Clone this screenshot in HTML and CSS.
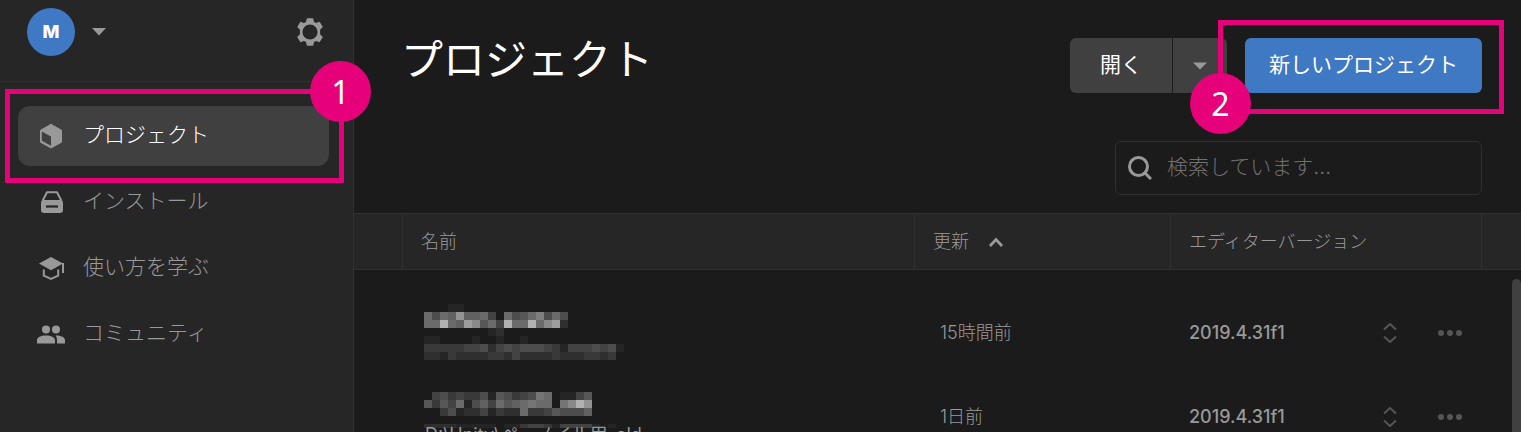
FILE: index.html
```html
<!DOCTYPE html>
<html lang="ja">
<head>
<meta charset="utf-8">
<title>プロジェクト</title>
<link rel="stylesheet" href="styles.css">
</head>
<body>
<div class="app">
  <aside class="sidebar">
    <div class="account">
      <button class="avatar" type="button">M</button>
      <button class="icon-button account-menu" type="button" aria-label="アカウント">
        <svg width="14" height="8" viewBox="0 0 14 8"><path d="M0 0h14L7 7.500z" fill="#999"/></svg>
      </button>
      <button class="icon-button settings" type="button" aria-label="設定">
        <svg width="28" height="28" viewBox="0 0 28 28"><path fill="#999" fill-rule="evenodd" d="M10.900 0.300h6.200l.9 3.700 2 1.100 3.600-1.300 3.200 5.300-2.700 2.600v4.600l2.700 2.600-3.200 5.300-3.600-1.300-2 1.100-.9 3.700h-6.200l-.9-3.700-2-1.100-3.600 1.300-3.200-5.300 2.700-2.600v-4.600L1.200 9.100l3.200-5.300L8 5.100 10 4zM14 6.400a7.600 7.600 0 1 0 0 15.200a7.600 7.600 0 1 0 0-15.200z"/></svg>
      </button>
    </div>
    <nav class="nav">
      <a class="nav-item active" href="#projects">
        <svg width="26" height="26" viewBox="0 0 26 26"><path fill="#999" stroke="#999" stroke-linejoin="round" d="M13 1.300l10.500 6v11.900L13 25 2.500 19.200V7.300z"/><path fill="#404040" d="M3.800 8.600l9.200 5v9.200l-9.200-5z"/></svg>
        <span class="nav-label">プロジェクト</span>
        <span class="marker"><span class="marker-number">1</span></span>
      </a>
      <a class="nav-item" href="#installs">
        <svg width="26" height="26" viewBox="0 0 26 26"><path fill="none" stroke="#999" stroke-width="2" stroke-linejoin="round" d="M4.500 12L9 3.200h10L23.500 12"/><rect x="3" y="11" width="22" height="13" rx="3" fill="#999"/><path d="M8 17.500h12" stroke="#262626" stroke-width="2.200"/></svg>
        <span class="nav-label">インストール</span>
      </a>
      <a class="nav-item" href="#learn">
        <svg width="26" height="26" viewBox="0 0 26 26"><path fill="#999" d="M13 2l12 6.500L13 15.200 1 8.500z"/><path d="M25 8v10M5.800 14.500v6.200l7.200 3.200 7.200-3.200v-6.200" fill="none" stroke="#999" stroke-width="2"/></svg>
        <span class="nav-label">使い方を学ぶ</span>
      </a>
      <a class="nav-item" href="#community">
        <svg width="28" height="26" viewBox="0 0 28 26"><g fill="#999"><circle cx="9" cy="8.500" r="4"/><circle cx="19" cy="8.500" r="4"/><path d="M0 22.500v-3c0-3.400 4-5 9-5s9 1.600 9 5v3zM18.500 14.600c5.500 0 9.500 1.500 9.500 4.900v3h-8v-3c0-2-.5-3.600-1.500-4.900z"/></g></svg>
        <span class="nav-label">コミュニティ</span>
      </a>
    </nav>
  </aside>

  <main class="main">
    <header class="toolbar">
      <h1 class="title">プロジェクト</h1>
      <div class="actions">
        <div class="split">
          <button class="button open" type="button">開く</button>
          <button class="button more" type="button" aria-label="その他">
            <svg width="14" height="8" viewBox="0 0 14 8"><path d="M0 0.500h14L7 7.500z" fill="#999"/></svg>
          </button>
        </div>
        <div class="create">
          <button class="button primary" type="button">新しいプロジェクト</button>
          <span class="marker"><span class="marker-number">2</span></span>
        </div>
      </div>
    </header>
    <div class="search-row">
      <label class="search">
        <svg width="24" height="24" viewBox="0 0 24 24" fill="none" stroke="#999" stroke-width="3"><circle cx="10.500" cy="10.500" r="9"/><path d="M17 17l6 6"/></svg>
        <input type="search" placeholder="検索しています..." aria-label="検索">
      </label>
    </div>
    <div class="list">
      <table class="projects">
        <colgroup><col class="col-lead"><col><col class="col-updated"><col class="col-version"><col class="col-end"></colgroup>
        <thead>
          <tr>
            <th></th><th>名前</th>
            <th>更新<svg class="sort" width="16" height="10" viewBox="0 0 16 10"><path d="M2 9l6-6.500L14 9" fill="none" stroke="#999" stroke-width="2.800"/></svg></th>
            <th>エディターバージョン</th><th></th>
          </tr>
        </thead>
        <tbody>
          <tr>
            <td></td>
            <td class="name"><svg class="mosaic" width="208" height="56" data-rows="00011/8587c7784085 68a585/88f87db684f88f8bd2/0000000012/11000010010010/3333344524545554314445451/221322223324222232223323"></svg></td>
            <td class="updated">15時間前</td>
            <td><div class="version">2019.4.31f1
              <span class="row-actions">
                <button class="icon-button" type="button" aria-label="バージョンを選択"><svg width="14" height="20" viewBox="0 0 14 20" fill="none" stroke="#555" stroke-width="2"><path d="M1 6.500l6-5.500 6 5.500M1 13.500l6 5.500 6-5.500"/></svg></button>
                <button class="icon-button" type="button" aria-label="メニュー"><svg width="24" height="6" viewBox="0 0 24 6" fill="#555"><circle cx="3" cy="3" r="3"/><circle cx="12" cy="3" r="3"/><circle cx="21" cy="3" r="3"/></svg></button>
              </span></div></td>
            <td></td>
          </tr>
          <tr>
            <td></td>
            <td class="name name-path"><svg class="mosaic" width="208" height="36" data-rows="045343351653459801146/636481574867898809bfc/003512241322833465557//2222111110113443144441010"></svg><div class="path">D:\Unity\ペーノイル用_old</div></td>
            <td class="updated">1日前</td>
            <td><div class="version">2019.4.31f1
              <span class="row-actions">
                <button class="icon-button" type="button" aria-label="バージョンを選択"><svg width="14" height="20" viewBox="0 0 14 20" fill="none" stroke="#555" stroke-width="2"><path d="M1 6.500l6-5.500 6 5.500M1 13.500l6 5.500 6-5.500"/></svg></button>
                <button class="icon-button" type="button" aria-label="メニュー"><svg width="24" height="6" viewBox="0 0 24 6" fill="#555"><circle cx="3" cy="3" r="3"/><circle cx="12" cy="3" r="3"/><circle cx="21" cy="3" r="3"/></svg></button>
              </span></div></td>
            <td></td>
          </tr>
        </tbody>
      </table>
      <span class="scrollbar"></span>
    </div>
  </main>
</div>
<script src="mosaic.js"></script>
</body>
</html>
```
FILE: styles.css
```css
* { box-sizing: border-box; }

body {
  margin: 0;
  background: #1b1b1b;
  color: #999;
  font-family: Inter, "Noto Sans CJK JP", sans-serif;
  font-size: 18px;
  overflow: hidden;
}

svg { display: block; flex: none; }

button, input { font: inherit; color: inherit; }

.icon-button {
  padding: 0;
  border: 0;
  background: none;
}

.app {
  display: flex;
  height: 100vh;
  overflow: hidden;
}

.sidebar {
  flex: none;
  width: 354px;
  background: #262626;
  border-right: 1px solid #303030;
}

.account {
  display: flex;
  align-items: center;
  height: 82px;
  padding: 0 29px 18px 27px;
  border-bottom: 1px solid #303030;
}

.avatar {
  width: 48px;
  height: 48px;
  padding: 0;
  border: 0;
  border-radius: 50%;
  background: #3f78c3;
  color: #fff;
  font-weight: 800;
}

.account-menu { margin-left: 17px; }
.settings { margin-left: auto; }

.nav {
  display: flex;
  flex-direction: column;
  gap: 6px;
  padding: 24px 24px 0 18px;
}

.nav-item {
  position: relative;
  display: flex;
  align-items: center;
  height: 60px;
  padding: 0 19px;
  border-radius: 12px;
  color: #999;
  font-size: 21px;
  font-weight: 300;
  line-height: 30px;
  text-decoration: none;
}

.nav-item svg { width: 28px; margin-right: 18px; }
.nav-label { padding-bottom: 3px; }
.nav-item.active { background: #404040; color: #fff; }

.marker {
  position: absolute;
  z-index: 2;
  inset: -17px -15px -17px -13px;
  border: 5px solid #e6007a;
  pointer-events: none;
}

.marker-number {
  position: absolute;
  top: -33px;
  right: -32px;
  width: 61px;
  height: 61px;
  border-radius: 50%;
  background: #e6007a;
  color: #fff;
  font-family: "Noto Sans", sans-serif;
  font-size: 32px;
  font-weight: 400;
  line-height: 62px;
  text-align: center;
}

.create .marker { inset: -18px -22px -21px -27px; }
.create .marker-number { top: 48px; right: auto; left: -33px; }

.main {
  flex: 1;
  min-width: 0;
}

.toolbar {
  display: flex;
  justify-content: space-between;
  align-items: flex-start;
  padding: 28px 39px 0 47px;
}

.title {
  margin: 0;
  padding-top: 2px;
  color: #fff;
  font-size: 42px;
  font-weight: 400;
  line-height: 60px;
}

.actions {
  display: flex;
  gap: 18px;
  padding-top: 10px;
}

.split { display: flex; gap: 1px; }
.create { position: relative; }

.button {
  display: flex;
  align-items: center;
  justify-content: center;
  height: 55px;
  padding: 0 30px 6px;
  border: 0;
  border-radius: 6px;
  background: #404040;
  color: #fff;
  font-size: 21px;
}

.open { border-radius: 6px 0 0 6px; }
.more { padding: 0 20px; border-radius: 0 6px 6px 0; }
.primary { padding: 0 24px 6px; background: #3f78c3; }

.search-row {
  display: flex;
  justify-content: flex-end;
  padding: 48px 39px 18px 48px;
}

.search {
  display: flex;
  align-items: center;
  gap: 15px;
  width: 367px;
  height: 54px;
  padding: 0 12px;
  border: 1px solid #303030;
  border-radius: 6px;
}

.search input {
  flex: 1;
  min-width: 0;
  padding: 0 0 3px;
  border: 0;
  outline: 0;
  background: none;
  font-size: 21px;
  font-weight: 300;
}

.search input::placeholder { color: #707070; }

.list { position: relative; }

.projects {
  width: 100%;
  border-collapse: separate;
  border-spacing: 0;
  table-layout: fixed;
}

.col-lead { width: 49px; }
.col-updated { width: 256px; }
.col-version { width: 311px; }
.col-end { width: 39px; }

.projects th {
  height: 57px;
  padding: 0 18px;
  border: 1px solid #303030;
  border-width: 1px 1px 1px 0;
  background: #262626;
  font-weight: 300;
  line-height: 26px;
  text-align: left;
}

.projects th:last-child { border-right: 0; }
.sort { display: inline-block; margin-left: 19px; vertical-align: 1px; }

.projects td {
  height: 84px;
  padding: 2px 20px 0 18px;
  line-height: 26px;
}

.projects tbody::before {
  content: "";
  display: block;
  height: 20px;
}

.projects .name {
  padding: 14px 21px 0;
  vertical-align: top;
}

.projects .name-path { padding-top: 18px; }

.projects .updated { padding-left: 25px; font-weight: 300; }

.path {
  margin-top: -6px;
  padding-left: 1px;
  white-space: nowrap;
}

.version {
  display: flex;
  align-items: center;
  justify-content: space-between;
  font-weight: 500;
}

.row-actions { display: flex; gap: 41px; }

.scrollbar {
  position: absolute;
  top: 66px;
  right: 0;
  width: 9px;
  height: 100vh;
  border-radius: 5px;
  background: #404040;
}
```
FILE: mosaic.js
```js
// Fills each mosaic with 8px squares; every hex digit is a brightness level.
document.querySelectorAll(".mosaic").forEach(function (svg) {
  svg.dataset.rows.replace(/ /g, "").split("/").forEach(function (row, y) {
    row.split("").forEach(function (digit, x) {
      var level = 27 + parseInt(digit, 16) * 10;
      if (level === 27) return;
      var rect = document.createElementNS("http://www.w3.org/2000/svg", "rect");
      rect.setAttribute("x", x * 8);
      rect.setAttribute("y", y * 8);
      rect.setAttribute("width", 8);
      rect.setAttribute("height", 8);
      rect.setAttribute("fill", "rgb(" + level + "," + level + "," + level + ")");
      svg.appendChild(rect);
    });
  });
});
```
